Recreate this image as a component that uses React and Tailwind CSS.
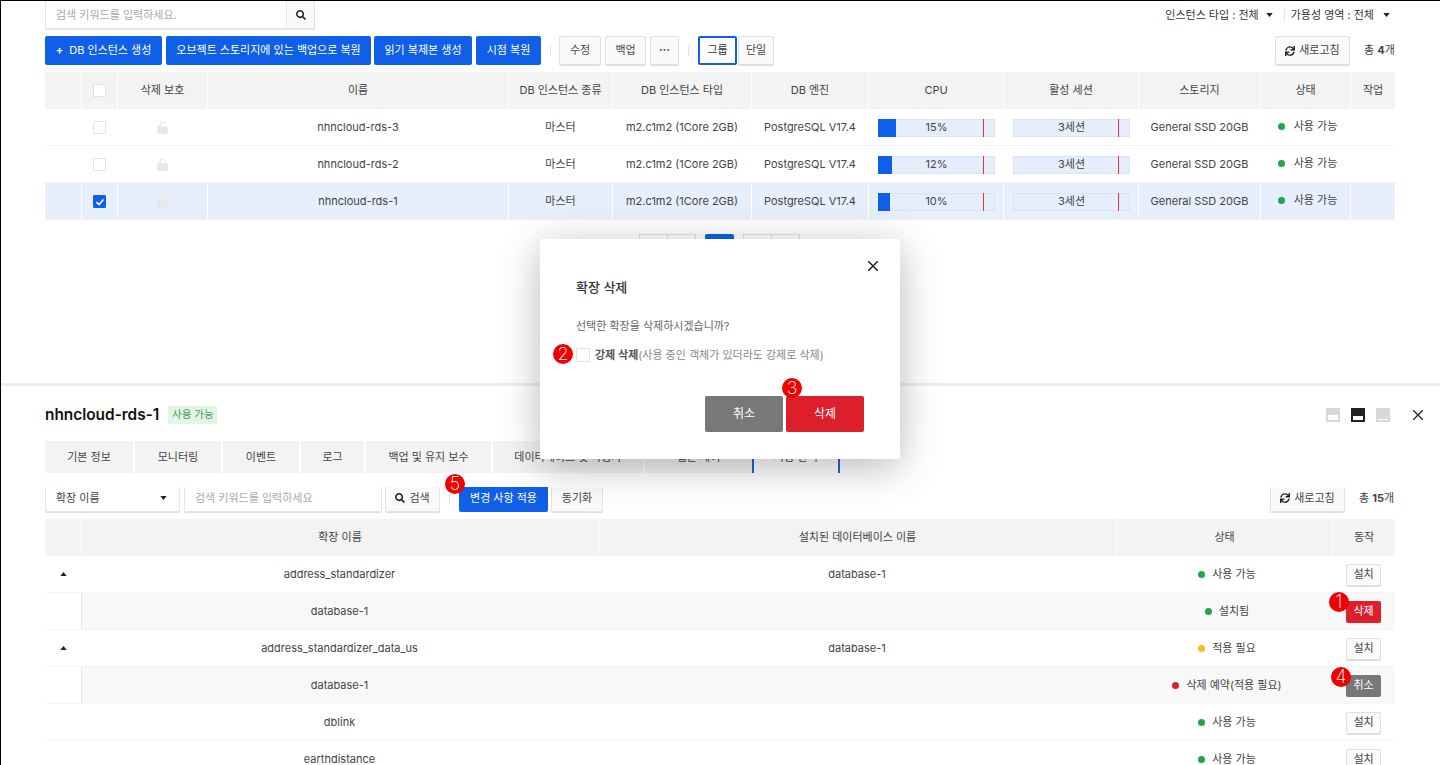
// 확장 삭제 모달이 떠 있는 RDS 인스턴스 화면
import React from 'react'
import { FaSearch, FaSync } from 'react-icons/fa'

const FONT = 'font-[Inter,"Noto_Sans_CJK_KR",sans-serif]'

const topCols = 'grid grid-cols-[37px_36px_90px_301px_104px_139px_117px_135px_135px_122px_90px_44px]'
const extCols = 'grid grid-cols-[37px_517px_518px_216px_62px]'

const instances = [
  { name: 'nhncloud-rds-3', cpu: 15, selected: false },
  { name: 'nhncloud-rds-2', cpu: 12, selected: false },
  { name: 'nhncloud-rds-1', cpu: 10, selected: true },
]

const extensions = [
  { arrow: true, name: 'address_standardizer', db: 'database-1', dot: 'bg-[#22a54a]', status: '사용 가능', action: '설치' },
  { child: true, name: 'database-1', db: '', dot: 'bg-[#22a54a]', status: '설치됨', action: '삭제', mark: '1' },
  { arrow: true, name: 'address_standardizer_data_us', db: 'database-1', dot: 'bg-[#f5bd17]', status: '적용 필요', action: '설치' },
  { child: true, name: 'database-1', db: '', dot: 'bg-[#dc1f2b]', status: '삭제 예약(적용 필요)', action: '취소', mark: '4' },
  { name: 'dblink', db: '', dot: 'bg-[#22a54a]', status: '사용 가능', action: '설치' },
  { name: 'earthdistance', db: '', dot: 'bg-[#22a54a]', status: '사용 가능', action: '설치' },
]

const tabs = [
  ['기본 정보', 'w-[88px]'],
  ['모니터링', 'w-[86px]'],
  ['이벤트', 'w-[76px]'],
  ['로그', 'w-[63px]'],
  ['백업 및 유지 보수', 'w-[125px]'],
  ['데이터베이스 및 사용자', 'w-[150px]'],
  ['접근 제어', 'w-[107px]'],
]

const Btn = ({ children, className = '' }) => (
  <button className={`h-[29px] rounded-[2px] border border-[#e0e0e0] bg-[#fafafa] text-[11px] whitespace-nowrap text-[#444] shadow-[0_1px_0_#ddd] ${className}`}>
    {children}
  </button>
)

const BlueBtn = ({ children, className = '' }) => (
  <button className={`h-[29px] rounded-[2px] bg-[#0f5fe8] text-[11px] whitespace-nowrap text-white ${className}`}>
    {children}
  </button>
)

const Mark = ({ n, className = '' }) => (
  <span className={`absolute flex h-5 w-5 items-center justify-center rounded-full bg-[#f00000] text-[18px] font-extralight leading-none text-white ${className}`}>
    {n}
  </span>
)

const Caret = ({ className = '' }) => (
  <svg viewBox="0 0 8 5" className={`h-[4px] w-[7px] fill-[#222] ${className}`}><path d="M0 0h8L4 5z" /></svg>
)

const Lock = () => (
  <svg viewBox="0 0 12 15" className="h-[13px] w-[11px] fill-[#e8e8e8]">
    <path d="M2.5 6V4a3.5 3.5 0 0 1 7 0h-1.8a1.7 1.7 0 0 0-3.4 0v2H12v9H0V6z" />
  </svg>
)

const Check = ({ checked }) => (
  <span className={`flex h-[13px] w-[13px] items-center justify-center rounded-[1px] border ${checked ? 'border-[#0f5fe8] bg-[#0f5fe8]' : 'border-[#e2e2e2] bg-white'}`}>
    {checked && (
      <svg viewBox="0 0 10 10" className="h-[10px] w-[10px] fill-none stroke-white stroke-[1.6]"><path d="M1.5 5.2 4 7.6l4.5-5.2" /></svg>
    )}
  </span>
)

const Gauge = ({ pct, label, line }) => (
  <div className="relative flex h-[18px] w-[117px] items-center justify-center border border-[#d5e3fb] bg-[#e6eefc] text-[11px] text-[#444]">
    {pct && <div className="absolute inset-y-[-1px] left-[-1px] bg-[#0f5fe8]" style={{ width: `${pct * 1.17}px` }} />}
    <div className="absolute inset-y-[-1px] z-10 w-px bg-[#e8323c]" style={{ left: `${line}px` }} />
    <span className="relative">{label}</span>
  </div>
)

const Cell = ({ children, className = '' }) => (
  <div className={`flex items-center justify-center ${className}`}>{children}</div>
)

const TopTable = () => {
  const heads = ['', '', '삭제 보호', '이름', 'DB 인스턴스 종류', 'DB 인스턴스 타입', 'DB 엔진', 'CPU', '활성 세션', '스토리지', '상태', '작업']
  return (
    <div className="mt-[7px] text-[11px] text-[#444]">
      <div className={`${topCols} h-[37px]`}>
        {heads.map((h, i) => (
          <Cell key={i} className={`bg-[#f3f3f3] ${i < 11 ? 'border-r border-white' : ''}`}>
            {i === 1 ? <Check /> : h}
          </Cell>
        ))}
      </div>
      {instances.map(row => (
        <div key={row.name} className={`${topCols} h-[37px] border-b border-[#f4f4f4] pt-px ${row.selected ? 'bg-[#e7effc]' : 'bg-white'}`}>
          <Cell className="border-r border-white" />
          <Cell className="border-r border-white"><Check checked={row.selected} /></Cell>
          <Cell className="border-r border-white"><Lock /></Cell>
          <Cell className="border-r border-white">{row.name}</Cell>
          <Cell className="border-r border-white">마스터</Cell>
          <Cell className="border-r border-white">m2.c1m2 (1Core 2GB)</Cell>
          <Cell className="border-r border-white">PostgreSQL V17.4</Cell>
          <Cell className="!justify-start border-r border-white pl-[9px]"><Gauge pct={row.cpu} label={`${row.cpu}%`} line={104} /></Cell>
          <Cell className="!justify-start border-r border-white pl-[9px]"><Gauge label="3세션" line={104} /></Cell>
          <Cell className="border-r border-white">General SSD 20GB</Cell>
          <Cell className="border-r border-white pb-[3px] pl-[4px]">
            <span className="mr-[9px] h-[7px] w-[7px] rounded-full bg-[#22a54a]" />사용 가능
          </Cell>
          <Cell />
        </div>
      ))}
    </div>
  )
}

const ExtTable = () => (
  <div className="mt-[7px] text-[11px] leading-[11px] text-[#444]">
    <div className={`${extCols} h-[37px]`}>
      {['', '확장 이름', '설치된 데이터베이스 이름', '상태', '동작'].map((h, i) => (
        <Cell key={i} className={`bg-[#f3f3f3] ${i < 4 ? 'border-r border-white' : ''}`}>{h}</Cell>
      ))}
    </div>
    {extensions.map((row, i) => (
      <div key={i} className={`${extCols} h-[37px] border-b border-[#f5f5f5] bg-white`}>
        <Cell className={row.child ? 'border-r border-[#e6e6e6]' : ''}>
          {row.arrow && <Caret className="rotate-180" />}
        </Cell>
        <Cell className={`pr-[2px] pt-px ${row.child ? 'bg-[#f8f8f8]' : ''}`}>{row.name}</Cell>
        <Cell className={`pr-[2px] pt-px ${row.child ? 'bg-[#f8f8f8]' : ''}`}>{row.db}</Cell>
        <Cell className={`pl-[4px] pt-px ${row.child ? 'bg-[#f8f8f8]' : ''}`}>
          <span className={`mr-[7px] h-[7px] w-[7px] rounded-full ${row.dot}`} />{row.status}
        </Cell>
        <Cell className={`relative pr-px pt-px ${row.child ? 'bg-[#f8f8f8]' : ''}`}>
          {row.action === '설치' && <Btn className="!h-[22px] w-[35px]">설치</Btn>}
          {row.action === '삭제' && <button className="h-[22px] w-[35px] rounded-[2px] bg-[#dc1f2b] text-[11px] text-white">삭제</button>}
          {row.action === '취소' && <button className="h-[22px] w-[35px] rounded-[2px] bg-[#787878] text-[11px] text-white">취소</button>}
          {row.mark && <Mark n={row.mark} className={row.mark === '1' ? 'left-[-4px] top-[-1px]' : 'left-[-2px] top-0'} />}
        </Cell>
      </div>
    ))}
  </div>
)

const LayoutIcon = ({ className, bar }) => (
  <span className={`flex h-[14px] w-[14px] flex-col justify-end ${className}`}>
    <span className={`mx-[2px] mb-[2px] ${bar}`} />
  </span>
)

const Modal = () => (
  <div className="absolute left-[539px] top-[238px] z-20 h-[220px] w-[360px] rounded-[2px] bg-white shadow-[0_8px_40px_rgba(0,0,0,0.28)]">
    <svg viewBox="0 0 10 10" className="absolute right-[22px] top-[22px] h-[10px] w-[10px] fill-none stroke-[#222] stroke-[1.5]"><path d="M0 0l10 10M10 0 0 10" /></svg>
    <div className="pl-9 pt-[39px] text-[13px] font-medium text-[#333]">확장 삭제</div>
    <div className="pl-9 pt-[20px] text-[11px] text-[#666]">선택한 확장을 삭제하시겠습니까?</div>
    <div className="flex items-center pl-9 pt-[13px] text-[11px] text-[#888]">
      <span className="mr-[5px] h-[14px] w-[14px] rounded-[1px] border border-[#e2e2e2]" />
      <span className="font-semibold text-[#555]">강제 삭제</span>(사용 중인 객체가 있더라도 강제로 삭제)
    </div>
    <div className="mt-[32px] flex justify-end gap-[3px] pr-9 text-[12px] text-white">
      <button className="h-9 w-[78px] rounded-[2px] bg-[#787878]">취소</button>
      <button className="h-9 w-[78px] rounded-[2px] bg-[#dc1f2b]">삭제</button>
    </div>
    <Mark n="2" className="left-[13px] top-[105px]" />
    <Mark n="3" className="left-[242px] top-[139px]" />
  </div>
)

export default function App() {
  return (
    <div className={`relative h-[765px] w-[1440px] overflow-hidden border-l border-t border-black bg-white ${FONT}`}>
      <div className="h-[382px] pl-[44px] pr-[45px]">
        {/* 상단 검색 */}
        <div className="flex h-[28px] items-start justify-between">
          <div className="flex h-[28px] w-[270px] rounded-b-[2px] border border-t-0 border-[#e4e4e4] shadow-[0_1px_0_#e8e8e8]">
            <div className="flex-1 pl-[10px] pt-[6px] text-[11px] text-[#aaa]">검색 키워드를 입력하세요.</div>
            <div className="flex w-[28px] items-center justify-center border-l border-[#e8e8e8] bg-[#fafafa]"><FaSearch className="h-[10px] w-[10px] text-[#222]" /></div>
          </div>
          <div className="flex items-center pr-[5px] pt-[6px] text-[11px] text-[#333]">
            인스턴스 타입 : 전체<Caret className="ml-[7px] mr-[11px]" />
            <span className="mr-[6px] h-[14px] w-px bg-[#e4e4e4]" />
            가용성 영역 : 전체<Caret className="ml-[9px]" />
          </div>
        </div>

        {/* 버튼 줄 */}
        <div className="mt-[7px] flex items-center">
          <BlueBtn className="w-[117px]"><span className="mr-[6px] font-bold">+</span>DB 인스턴스 생성</BlueBtn>
          <BlueBtn className="ml-[4px] w-[205px]">오브젝트 스토리지에 있는 백업으로 복원</BlueBtn>
          <BlueBtn className="ml-[3px] w-[98px]">읽기 복제본 생성</BlueBtn>
          <BlueBtn className="ml-[4px] w-[65px]">시점 복원</BlueBtn>
          <span className="ml-[9px] mr-[8px] h-[11px] w-px bg-[#e4e4e4]" />
          <Btn className="w-[42px]">수정</Btn>
          <Btn className="ml-[4px] w-[41px]">백업</Btn>
          <Btn className="ml-[4px] w-[29px] font-bold">⋯</Btn>
          <span className="mx-[9px] h-[11px] w-px bg-[#e4e4e4]" />
          <button className="h-[29px] w-[39px] rounded-[2px] border-2 border-[#0f5fe8] text-[11px] text-[#333]">그룹</button>
          <Btn className="ml-px w-[36px]">단일</Btn>
          <div className="ml-auto flex items-center">
            <Btn className="flex w-[75px] items-center justify-center gap-1"><FaSync className="h-[10px] w-[10px] text-[#222]" />새로고침</Btn>
            <span className="ml-[14px] w-[31px] whitespace-nowrap text-[11px] text-[#444]">총 <b className="font-bold">4</b>개</span>
          </div>
        </div>

        <TopTable />

        {/* 페이지네이션 */}
        <div className="mt-[14px] flex justify-center gap-[9px] pr-px">
          <div className="flex"><span className="h-5 w-[29px] border border-[#e0e0e0]" /><span className="h-5 w-[28px] border border-l-0 border-[#e0e0e0]" /></div>
          <span className="h-5 w-[29px] rounded-[2px] bg-[#0f5fe8]" />
          <div className="flex"><span className="h-5 w-[29px] border border-[#e0e0e0]" /><span className="h-5 w-[28px] border border-l-0 border-[#e0e0e0]" /></div>
        </div>
      </div>

      {/* 하단 상세 패널 */}
      <div className="h-[382px] border-t-[3px] border-[#eeeeee] pl-[44px] pr-[45px]">
        <div className="flex h-[52px] items-center pt-[6px]">
          <span className="text-[15.4px] font-semibold text-[#111]">nhncloud-rds-1</span>
          <span className="ml-[9px] flex h-[18px] w-[49px] items-center justify-center bg-[#e4f4e6] text-[10.5px] text-[#38a552]">사용 가능</span>
          <div className="-mr-[28px] ml-auto flex items-center gap-[11px]">
            <LayoutIcon className="bg-[#d8d8d8]" bar="h-[5px] bg-white" />
            <LayoutIcon className="bg-[#222]" bar="h-[4px] bg-white" />
            <LayoutIcon className="bg-[#d8d8d8]" bar="h-px bg-white" />
            <svg viewBox="0 0 10 10" className="ml-[12px] h-[10px] w-[10px] fill-none stroke-[#222] stroke-[1.3]"><path d="M0 0l10 10M10 0 0 10" /></svg>
          </div>
        </div>

        {/* 탭 */}
        <div className="mt-[3px] flex h-[32px] gap-[2px] text-[11px] text-[#444]">
          {tabs.map(([label, w]) => (
            <div key={label} className={`flex items-center justify-center bg-[#f3f3f3] ${w}`}>{label}</div>
          ))}
          <div className="-ml-[2px] flex w-[88px] items-center justify-center border-x-2 border-[#2a62d8] bg-white">사용 관리</div>
        </div>

        {/* 확장 툴바 */}
        <div className="mt-[14px] flex h-[25px] items-center text-[11px] text-[#444]">
          <div className="flex h-[25px] w-[135px] items-center justify-between rounded-b-[2px] border border-t-0 border-[#e4e4e4] pb-[2px] pl-[10px] pr-[12px] shadow-[0_1px_0_#ddd]">
            확장 이름<Caret />
          </div>
          <div className="ml-[4px] flex h-[25px] w-[198px] items-center rounded-b-[2px] border border-t-0 border-[#e4e4e4] pb-[2px] pl-[10px] text-[#aaa] shadow-[0_1px_0_#ddd]">검색 키워드를 입력하세요</div>
          <div className="ml-[3px] flex h-[25px] w-[55px] items-center justify-center gap-1 rounded-b-[2px] border border-t-0 border-[#e4e4e4] bg-[#fafafa] pb-[2px] shadow-[0_1px_0_#ddd]"><FaSearch className="h-[10px] w-[10px] text-[#222]" />검색</div>
          <span className="ml-[9px] mr-[9px] h-[11px] w-px bg-[#e4e4e4]" />
          <div className="flex h-[25px] w-[89px] items-center justify-center rounded-b-[2px] bg-[#0f5fe8] pb-[2px] text-white">변경 사항 적용</div>
          <div className="ml-[3px] flex h-[25px] w-[52px] items-center justify-center rounded-b-[2px] border border-t-0 border-[#e4e4e4] bg-[#fafafa] pb-[2px] shadow-[0_1px_0_#ddd]">동기화</div>
          <div className="ml-auto flex items-center">
            <div className="flex h-[25px] w-[75px] items-center justify-center gap-1 rounded-b-[2px] border border-t-0 border-[#e4e4e4] bg-[#fafafa] pb-[2px] shadow-[0_1px_0_#ddd]"><FaSync className="h-[10px] w-[10px] text-[#222]" />새로고침</div>
            <span className="ml-[14px] w-[36px] whitespace-nowrap pb-[2px]">총 <b className="font-bold">15</b>개</span>
          </div>
        </div>

        <ExtTable />
      </div>

      <Mark n="5" className="left-[444px] top-[473px]" />
      <Modal />
    </div>
  )
}
